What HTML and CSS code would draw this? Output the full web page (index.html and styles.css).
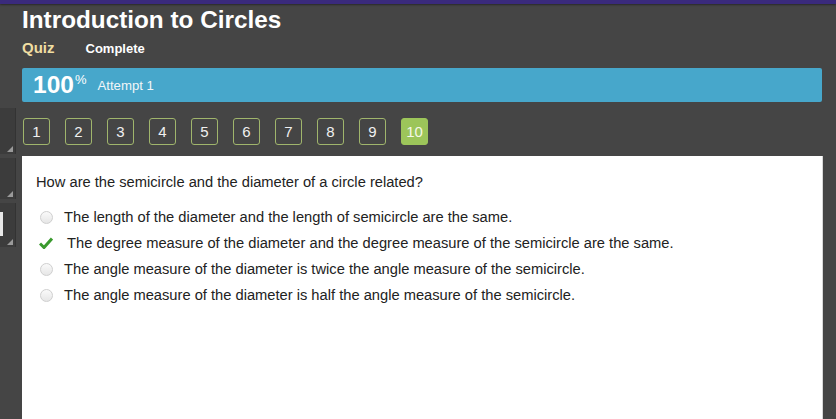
FILE: index.html
```html
<!DOCTYPE html>
<html>
<head>
<meta charset="utf-8">
<link rel="stylesheet" href="styles.css">
</head>
<body>
<div class="topbar"></div>
<div class="side">
  <div class="side-panel p1"><span class="grip"></span></div>
  <div class="side-panel p2"><span class="grip"></span></div>
  <div class="side-panel p3"><span class="nub"></span><span class="grip"></span></div>
</div>
<main class="main">
  <h1 class="title">Introduction to Circles</h1>
  <div class="subnav">
    <span class="quiz">Quiz</span>
    <span class="complete">Complete</span>
  </div>
  <div class="scorebar">
    <span class="score">100<sup>%</sup></span>
    <span class="attempt">Attempt 1</span>
  </div>
  <div class="pager">
    <span class="pg">1</span>
    <span class="pg">2</span>
    <span class="pg">3</span>
    <span class="pg">4</span>
    <span class="pg">5</span>
    <span class="pg">6</span>
    <span class="pg">7</span>
    <span class="pg">8</span>
    <span class="pg">9</span>
    <span class="pg active">10</span>
  </div>
  <section class="card">
    <p class="question">How are the semicircle and the diameter of a circle related?</p>
    <ul class="options">
      <li class="opt"><span class="radio"></span><span>The length of the diameter and the length of semicircle are the same.</span></li>
      <li class="opt correct"><svg class="check" width="14" height="12" viewBox="0 0 14 12"><path d="M1 6.5 L5 10.5 L13 1.5" fill="none" stroke="#3a9a2e" stroke-width="3" stroke-linejoin="miter"/></svg><span>The degree measure of the diameter and the degree measure of the semicircle are the same.</span></li>
      <li class="opt"><span class="radio"></span><span>The angle measure of the diameter is twice the angle measure of the semicircle.</span></li>
      <li class="opt"><span class="radio"></span><span>The angle measure of the diameter is half the angle measure of the semicircle.</span></li>
    </ul>
  </section>
</main>
</body>
</html>
```
FILE: styles.css
```css
* { box-sizing: border-box; }
html, body { margin: 0; padding: 0; }
body {
  background: #454545;
  font-family: "Liberation Sans", Arial, sans-serif;
  width: 836px;
  height: 419px;
  overflow: hidden;
  position: relative;
}
.topbar {
  height: 4px;
  background: #3a2a7c;
  box-shadow: 0 1px 2px rgba(0,0,0,0.4);
}
.side {
  position: absolute;
  left: 0;
  top: 108px;
  width: 16px;
  display: flex;
  flex-direction: column;
  gap: 4px;
}
.side-panel {
  position: relative;
  background: #3c3c3c;
  border-right: 1px solid #333;
}
.p1 { height: 46px; }
.p2 { height: 41px; }
.p3 { height: 44px; }
.grip {
  position: absolute;
  right: 2px;
  bottom: 2px;
  width: 0; height: 0;
  border-left: 6px solid transparent;
  border-bottom: 6px solid #9a9a9a;
}
.nub {
  position: absolute;
  left: 0;
  top: 9px;
  width: 3px;
  height: 24px;
  background: #e8e8e8;
}
.main {
  margin-left: 22px;
  width: 800px;
}
.title {
  margin: 0;
  padding-top: 1px;
  font-size: 24.3px;
  line-height: 29px;
  font-weight: bold;
  color: #fff;
}
.subnav {
  display: flex;
  align-items: baseline;
  gap: 31px;
  margin-top: 5px;
  height: 24px;
}
.quiz {
  color: #f0dea2;
  font-weight: bold;
  font-size: 15px;
}
.complete {
  color: #fff;
  font-weight: bold;
  font-size: 13px;
}
.scorebar {
  margin-top: 5px;
  height: 34px;
  background: #47a7cb;
  border-radius: 2px;
  display: flex;
  align-items: center;
  padding-left: 11px;
  color: #fff;
}
.score {
  font-size: 24.5px;
  font-weight: bold;
  line-height: 1;
}
.score sup {
  font-size: 13px;
  font-weight: normal;
  vertical-align: 9px;
  margin-left: 1px;
}
.attempt {
  font-size: 13.2px;
  margin-left: 11px;
  color: #f2f6f8;
}
.pager {
  display: flex;
  gap: 15px;
  padding: 16px 0 11px 1px;
}
.pg {
  width: 27px;
  height: 27px;
  border: 1px solid #a0b56c;
  border-radius: 3px;
  color: #f0f0f0;
  font-size: 15px;
  display: flex;
  align-items: center;
  justify-content: center;
}
.pg.active {
  background: #9cc55a;
  border-color: #9cc55a;
  color: #f4f8e8;
}
.card {
  background: #fff;
  height: 270px;
  padding: 17px 14px;
  box-shadow: 1px 0 0 #d8d8d8;
}
.question {
  margin: 0 0 13px;
  font-size: 14.7px;
  line-height: 18px;
  color: #222;
}
.options {
  list-style: none;
  margin: 0;
  padding: 0;
}
.opt {
  display: flex;
  align-items: center;
  height: 26px;
  font-size: 14.7px;
  color: #222;
}
.radio {
  width: 13px;
  height: 13px;
  border-radius: 50%;
  border: 1px solid #cfcfcf;
  background: linear-gradient(#fafafa, #e6e6e6);
  margin-left: 4px;
  margin-right: 11px;
}
.check {
  margin-left: 3px;
  margin-right: 14px;
}
```
